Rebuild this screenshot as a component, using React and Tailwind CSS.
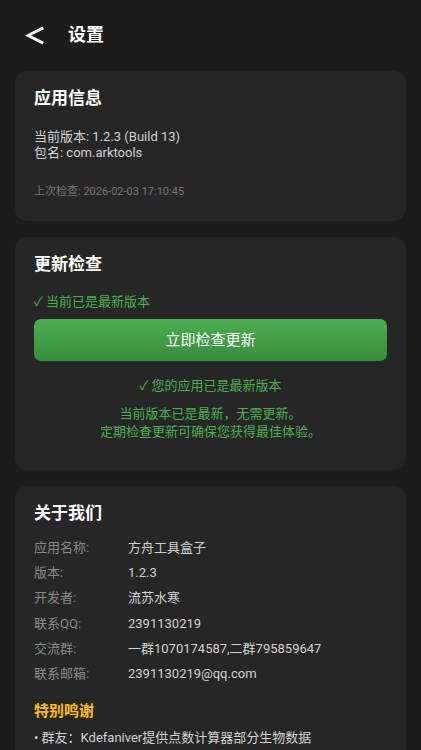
import React from "react";

const font = { fontFamily: '"Roboto", "Noto Sans CJK SC", sans-serif' };

const aboutRows = [
  ["应用名称:", "方舟工具盒子"],
  ["版本:", "1.2.3"],
  ["开发者:", "流苏水寒"],
  ["联系QQ:", "2391130219"],
  ["交流群:", "一群1070174587,二群795859647"],
  ["联系邮箱:", "2391130219@qq.com"],
];

const Card = ({ children, className = "" }) => (
  <div className={"mx-[15px] rounded-[12px] bg-[#262626] px-[19px] pt-[16px] " + className}>
    {children}
  </div>
);

export default function App() {
  return (
    <div className="min-h-screen bg-[#1c1c1c] pb-6 text-white" style={font}>
      {/* header */}
      <div className="flex h-[70px] items-center pl-[25px]">
        <svg width="19" height="19" viewBox="0 0 19 19" className="shrink-0">
          <path d="M17 2.5 L3 9.5 L17 16.5" fill="none" stroke="white" strokeWidth="2.8" strokeLinecap="square" strokeLinejoin="miter" />
        </svg>
        <span className="ml-[24px] text-[18px] font-bold leading-[22px]">设置</span>
      </div>

      <div className="mt-[1px] flex flex-col gap-[16px]">
        <Card className="pb-[22px]">
          <div className="text-[17px] font-bold leading-[22px]">应用信息</div>
          <div className="mt-[20px] text-[13px] leading-[16px] text-[#d2d2d2]">
            <div>当前版本: 1.2.3 (Build 13)</div>
            <div>包名: com.arktools</div>
          </div>
          <div className="mt-[24px] text-[11px] leading-[14px] text-[#777777]">
            上次检查: 2026-02-03 17:10:45
          </div>
        </Card>

        <Card className="pb-[29px]">
          <div className="text-[17px] font-bold leading-[22px]">更新检查</div>
          <div className="mt-[19px] text-[13px] leading-[16px] text-[#4caf50]">✓ 当前已是最新版本</div>
          <button className="mt-[9px] flex h-[42px] w-full items-center justify-center rounded-[7px] bg-gradient-to-b from-[#4cae50] to-[#378c3b] text-[15px] text-white">
            立即检查更新
          </button>
          <div className="mt-[16px] text-center text-[13px] leading-[18px] text-[#4caf50]">✓ 您的应用已是最新版本</div>
          <div className="mt-[10px] text-center text-[13px] leading-[18px] text-[#4caf50]">
            <div>当前版本已是最新，无需更新。</div>
            <div>定期检查更新可确保您获得最佳体验。</div>
          </div>
        </Card>

        <Card className="pb-[24px]">
          <div className="text-[17px] font-bold leading-[22px]">关于我们</div>
          <div className="mt-[11px]">
            {aboutRows.map(([k, v]) => (
              <div key={k} className="flex h-[25.3px] items-center text-[13px]">
                <span className="w-[94px] shrink-0 text-[#8a8a8a]">{k}</span>
                <span className="text-[#d2d2d2]">{v}</span>
              </div>
            ))}
          </div>
          <div className="mt-[13px] text-[15px] font-bold leading-[22px] text-[#ffc107]">特别鸣谢</div>
          <div className="mt-[7px] text-[13px] leading-[18px] text-[#d2d2d2]">
            <div>• 群友：Kdefaniver提供点数计算器部分生物数据</div>
          </div>
        </Card>
      </div>
    </div>
  );
}
